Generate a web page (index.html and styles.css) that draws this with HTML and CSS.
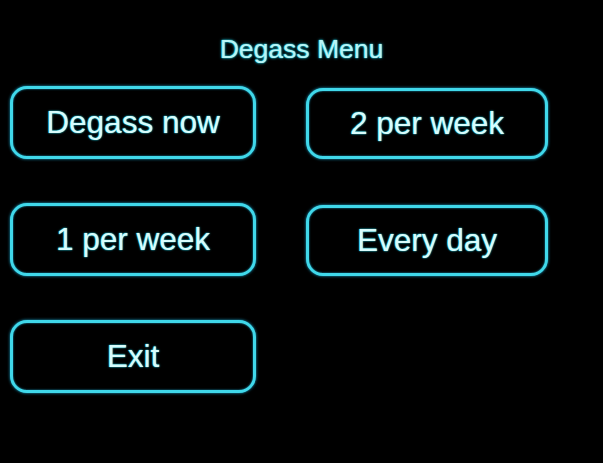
FILE: index.html
```html
<!DOCTYPE html>
<html>
<head>
<meta charset="utf-8">
<link rel="stylesheet" href="styles.css">
</head>
<body>
<div class="screen">
  <h1 class="title">Degass Menu</h1>
  <div class="grid">
    <button class="btn">Degass now</button>
    <button class="btn btn-right">2 per week</button>
    <button class="btn">1 per week</button>
    <button class="btn btn-right">Every day</button>
    <button class="btn">Exit</button>
  </div>
</div>
</body>
</html>
```
FILE: styles.css
```css
html, body {
  margin: 0;
  padding: 0;
  background: #000;
}
.screen {
  width: 603px;
  height: 463px;
  background: #000;
  font-family: "Liberation Sans", Arial, sans-serif;
  overflow: hidden;
}
.title {
  margin: 0;
  padding-top: 36px;
  font-size: 26.5px;
  line-height: 26px;
  font-weight: normal;
  text-align: center;
  color: #b8f4f6;
  text-shadow: 0 0 3px #1fc4d8, 0 0 1px #1fc4d8, 0 0 1px #1fc4d8;
}
.grid {
  margin-top: 24px;
  padding-left: 10px;
  display: grid;
  grid-template-columns: 246px 242px;
  grid-auto-rows: 73px;
  column-gap: 50px;
  row-gap: 44px;
}
.btn {
  box-sizing: border-box;
  background: #000;
  border: 3px solid #40d8ea;
  border-radius: 17px;
  box-shadow: 0 0 3px #1aa8d0, inset 0 0 2px #1aa8d0;
  color: #d8fcfc;
  font-family: "Liberation Sans", Arial, sans-serif;
  font-size: 31.5px;
  text-shadow: 0 0 2px #1fc4d8, 0 0 1px #1fc4d8;
  padding: 0;
  margin: 0;
}
.btn-right {
  margin-top: 2px;
}
```
